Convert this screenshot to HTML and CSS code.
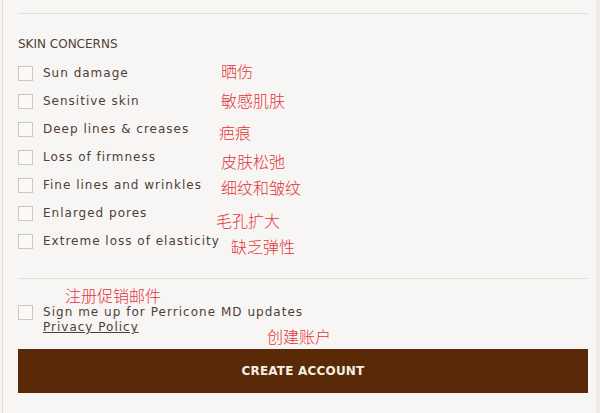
FILE: index.html
```html
<!DOCTYPE html>
<html lang="en">
<head>
<meta charset="utf-8">
<title>Skin concerns</title>
<link rel="stylesheet" href="styles.css">
</head>
<body>
<div class="panel">
  <div class="form">
    <hr class="rule top">
    <h3 class="heading">SKIN CONCERNS</h3>
    <ul class="options">
      <li class="option"><span class="box"></span><span class="label">Sun damage</span></li>
      <li class="option"><span class="box"></span><span class="label">Sensitive skin</span></li>
      <li class="option"><span class="box"></span><span class="label">Deep lines &amp; creases</span></li>
      <li class="option"><span class="box"></span><span class="label">Loss of firmness</span></li>
      <li class="option"><span class="box"></span><span class="label">Fine lines and wrinkles</span></li>
      <li class="option"><span class="box"></span><span class="label">Enlarged pores</span></li>
      <li class="option"><span class="box"></span><span class="label">Extreme loss of elasticity</span></li>
    </ul>
    <hr class="rule mid">
    <div class="signup">
      <span class="box"></span>
      <div class="signup-text">
        <span class="label wide">Sign me up for Perricone MD updates</span>
        <a class="policy" href="#">Privacy Policy</a>
      </div>
    </div>
    <button class="create">CREATE ACCOUNT</button>
  </div>
  <span class="note n1">晒伤</span>
  <span class="note n2">敏感肌肤</span>
  <span class="note n3">疤痕</span>
  <span class="note n4">皮肤松弛</span>
  <span class="note n5">细纹和皱纹</span>
  <span class="note n6">毛孔扩大</span>
  <span class="note n7">缺乏弹性</span>
  <span class="note n8">注册促销邮件</span>
  <span class="note n9">创建账户</span>
</div>
</body>
</html>
```
FILE: styles.css
```css
html, body {
  margin: 0;
  padding: 0;
  background: #f8f6f4;
}
body {
  font-family: "DejaVu Sans", Verdana, sans-serif;
  color: #4f4035;
}
.panel {
  position: relative;
  width: 598px;
  height: 413px;
  margin-left: 2px;
  border-left: 1px solid #e2dfdb;
  border-right: 4px solid #eeebe8;
  box-sizing: border-box;
}
.form {
  padding: 13px 8px 0 15px;
  display: flex;
  flex-direction: column;
}
.rule {
  margin: 0;
  border: 0;
  height: 1px;
  background: #e2dfdb;
}
.heading {
  margin: 23px 0 0 0;
  font-size: 12px;
  font-weight: normal;
  line-height: 14px;
  color: #4f4035;
}
.options {
  list-style: none;
  margin: 15px 0 0 0;
  padding: 0;
  display: flex;
  flex-direction: column;
  gap: 13px;
}
.option {
  display: flex;
  align-items: center;
  gap: 10px;
  height: 15px;
}
.box {
  flex: none;
  width: 13px;
  height: 13px;
  border: 1px solid #cbc7c3;
  background: #faf9f8;
}
.label {
  font-size: 12px;
  letter-spacing: 1px;
  line-height: 15px;
  color: #4f4035;
}
.mid {
  margin-top: 29px;
}
.signup {
  margin-top: 26px;
  display: flex;
  align-items: flex-start;
  gap: 10px;
}
.signup .box {
  margin-top: 0;
}
.signup-text {
  display: flex;
  flex-direction: column;
}
.wide {
  letter-spacing: 1.03px;
}
.policy {
  font-size: 12px;
  letter-spacing: 1px;
  line-height: 14px;
  color: #4f4035;
  text-decoration: underline;
}
.create {
  margin-top: 15px;
  height: 44px;
  border: 0;
  background: #5a2907;
  color: #f6efe3;
  font-family: "DejaVu Sans", Verdana, sans-serif;
  font-weight: bold;
  font-size: 12px;
  letter-spacing: 0.2px;
  padding: 0;
}
.note {
  position: absolute;
  font-family: "Noto Sans CJK SC", sans-serif;
  font-size: 16px;
  font-weight: 300;
  line-height: 18px;
  color: #e2343c;
}
.n1 { left: 218px; top: 62px; }
.n2 { left: 218px; top: 91px; }
.n3 { left: 216px; top: 123px; }
.n4 { left: 218px; top: 152px; }
.n5 { left: 218px; top: 178px; }
.n6 { left: 213px; top: 211px; }
.n7 { left: 228px; top: 237px; }
.n8 { left: 62px; top: 286px; }
.n9 { left: 264px; top: 327px; }
```
